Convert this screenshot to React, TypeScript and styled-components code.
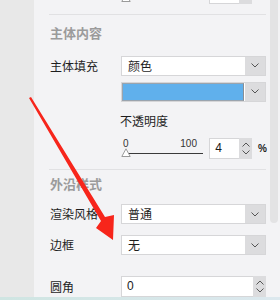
import styled, { createGlobalStyle } from "styled-components";

const GlobalStyle = createGlobalStyle`
  html, body {
    margin: 0;
    padding: 0;
    width: 280px;
    height: 300px;
    overflow: hidden;
    background: #f3f3f5;
  }
  body {
    font-family: "Noto Sans CJK SC", "Liberation Sans", sans-serif;
    color: #1e1e1e;
  }
`;

const Screen = styled.div`
  position: relative;
  width: 280px;
  height: 300px;
  display: flex;
  flex-direction: column;
  overflow: hidden;
`;

const Main = styled.div`
  flex: 1;
  display: flex;
  min-height: 0;
`;

const Gutter = styled.div`
  width: 34px;
  background: #e8e8e8;
`;

const Panel = styled.div`
  flex: 1;
  background: #f3f3f5;
  padding: 0 4px 0 15px;
  display: flex;
  flex-direction: column;
  overflow: hidden;
`;

const ScrollTrack = styled.div`
  width: 10px;
  background: #f3f3f5;
`;

const Thumb = styled.div`
  width: 8px;
  height: 223px;
  background: #e3e3e4;
  border-radius: 0 0 4px 4px;
`;

const BottomBar = styled.div`
  height: 3px;
  background: linear-gradient(90deg, #cfe5e2, #dce8ee);
`;

const Divider = styled.div<{ $top: number }>`
  height: 1px;
  background: #e1e1e3;
  margin-top: ${(p) => p.$top}px;
`;

const SectionTitle = styled.div<{ $top: number }>`
  margin-top: ${(p) => p.$top}px;
  padding-left: 1px;
  font-size: 13px;
  line-height: 20px;
  font-weight: 700;
  color: #9b9b9b;
`;

const Row = styled.div<{ $top: number }>`
  display: flex;
  align-items: center;
  margin-top: ${(p) => p.$top}px;
  flex-shrink: 0;
`;

const Label = styled.div`
  width: 71px;
  padding-left: 1px;
  font-size: 12px;
  line-height: 20px;
  white-space: nowrap;
`;

const Field = styled.div`
  width: 145px;
  height: 20px;
  box-sizing: border-box;
  border: 1px solid #d6d6d8;
  background: #fff;
  display: flex;
`;

const FieldText = styled.div`
  flex: 1;
  padding-left: 6px;
  font-size: 12px;
  line-height: 18px;
`;

const DropButton = styled.div`
  width: 20px;
  background: #dcdcde;
  display: flex;
  align-items: center;
  justify-content: center;
`;

const Swatch = styled.div`
  flex: 1;
  margin: 0 1px 0 0;
  background: #60b0ec;
  border: 1px solid #9aa4ae;
  border-right-color: #8a8f95;
`;

const SubLabel = styled.div<{ $top: number }>`
  margin-top: ${(p) => p.$top}px;
  margin-left: 71px;
  font-size: 12px;
  line-height: 20px;
`;

const SliderRowBox = styled.div<{ $top: number }>`
  display: flex;
  align-items: center;
  margin-top: ${(p) => p.$top}px;
  margin-left: 71px;
  height: 21px;
  flex-shrink: 0;
`;

const Slider = styled.div`
  position: relative;
  width: 85px;
  height: 21px;
  margin-right: 5px;
`;

const Scale = styled.div`
  display: flex;
  justify-content: space-between;
  width: 74px;
  height: 12px;
  padding-left: 3px;
  font-family: "Liberation Sans", sans-serif;
  font-size: 10px;
  line-height: 12px;
  color: #333;
`;

const Track = styled.div`
  margin: 3px 0 0 6px;
  width: 77px;
  height: 1px;
  background: #3a3a3a;
`;

const Knob = styled.svg`
  position: absolute;
  left: 1px;
  top: 10px;
`;

const NumberBox = styled.div<{ $width: number }>`
  width: ${(p) => p.$width}px;
  height: 21px;
  box-sizing: border-box;
  border: 1px solid #d6d6d8;
  border-right: none;
  background: #fff;
  font-family: "Liberation Sans", sans-serif;
  font-size: 12px;
  line-height: 19px;
  padding-left: 5px;
  color: #1a1a1a;
`;

const Spinner = styled.div`
  width: 13px;
  height: 21px;
  background: #dcdcde;
  display: flex;
  flex-direction: column;
  align-items: center;
  justify-content: center;
  gap: 3px;
`;

const Percent = styled.div`
  margin-left: 6px;
  width: 8px;
  font-family: "Liberation Sans", sans-serif;
  font-size: 10px;
  font-weight: 700;
  color: #222;
`;

const Arrow = styled.svg`
  position: absolute;
  left: 0;
  top: 0;
  pointer-events: none;
`;

const Chevron = ({ up }: { up?: boolean }) => (
  <svg width="8" height="5" viewBox="0 0 8 5">
    <path
      d={up ? "M0.5 4.5 L4 1 L7.5 4.5" : "M0.5 0.5 L4 4 L7.5 0.5"}
      fill="none"
      stroke="#555"
      strokeWidth="1"
    />
  </svg>
);

const Select = ({ value }: { value: string }) => (
  <Field>
    <FieldText>{value}</FieldText>
    <DropButton>
      <Chevron />
    </DropButton>
  </Field>
);

// the row scrolled mostly out of view at the top shows no labels
const OpacitySlider = ({
  top,
  value,
  partial,
}: {
  top: number;
  value: string;
  partial?: boolean;
}) => (
  <SliderRowBox $top={top}>
    <Slider>
      <Scale>
        {!partial && (
          <>
            <span>0</span>
            <span>100</span>
          </>
        )}
      </Scale>
      <Track />
      <Knob width="10" height="9" viewBox="0 0 10 9">
        <path d="M5 0.8 L9.2 8.5 L0.8 8.5 Z" fill="#fff" stroke="#9a9a9a" />
      </Knob>
    </Slider>
    <NumberBox $width={30}>{value}</NumberBox>
    <Spinner>
      <Chevron up />
      <Chevron />
    </Spinner>
    <Percent>{partial ? "" : "%"}</Percent>
  </SliderRowBox>
);

export default function App() {
  return (
    <>
      <GlobalStyle />
      <Screen>
        <Main>
          <Gutter />
          <Panel>
            <OpacitySlider top={-17} value="" partial />
            <Divider $top={10} />
            <SectionTitle $top={8}>主体内容</SectionTitle>
            <Row $top={13}>
              <Label>主体填充</Label>
              <Select value="颜色" />
            </Row>
            <Row $top={6}>
              <Label />
              <Field>
                <Swatch />
                <DropButton>
                  <Chevron />
                </DropButton>
              </Field>
            </Row>
            <SubLabel $top={9}>不透明度</SubLabel>
            <OpacitySlider top={7} value="4" />
            <Divider $top={10} />
            <SectionTitle $top={5}>外沿样式</SectionTitle>
            <Row $top={10}>
              <Label>渲染风格</Label>
              <Select value="普通" />
            </Row>
            <Row $top={11}>
              <Label>边框</Label>
              <Select value="无" />
            </Row>
            <Row $top={21}>
              <Label>圆角</Label>
              <NumberBox $width={132}>0</NumberBox>
              <Spinner>
                <Chevron up />
                <Chevron />
              </Spinner>
            </Row>
          </Panel>
          <ScrollTrack>
            <Thumb />
          </ScrollTrack>
        </Main>
        <BottomBar />
        <Arrow width="280" height="300" viewBox="0 0 280 300">
          <polygon
            points="29,98 31,97 105,217 114,215 113,240 96,228 101,221"
            fill="#f7251b"
          />
        </Arrow>
      </Screen>
    </>
  );
}
